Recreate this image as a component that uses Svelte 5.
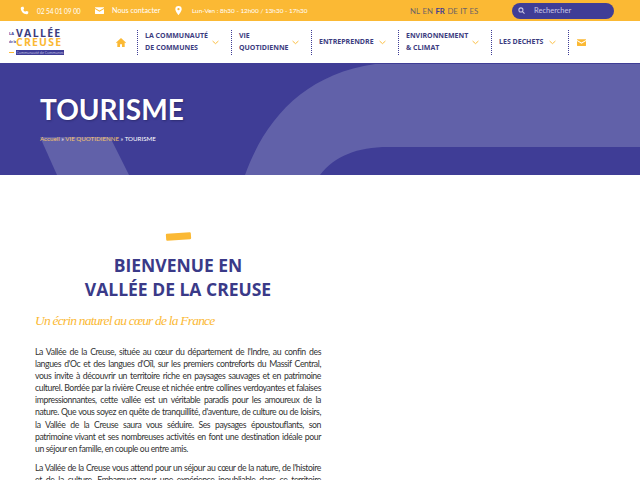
<script>
	const menu = [
		{ lines: ['LA COMMUNAUTÉ', 'DE COMMUNES'], width: 94 },
		{ lines: ['VIE', 'QUOTIDIENNE'], width: 80 },
		{ lines: ['ENTREPRENDRE'], width: 87 },
		{ lines: ['ENVIRONNEMENT', '& CLIMAT'], width: 93 },
		{ lines: ['LES DECHETS'], width: 77 }
	];
	const langs = ['NL', 'EN', 'FR', 'DE', 'IT', 'ES'];
</script>

<div class="page">
	<div class="topbar">
		<div class="contact">
			<svg class="ico phone" viewBox="0 0 24 24" fill="#fff"><path d="M6 2 9.500 2 11 8 8.500 10C9.500 12.500 11.500 14.500 14 15.500L16 13 22 14.500 22 18C22 20.500 20 22 18 22 9 21.500 2.500 15 2 6 2 4 3.500 2 6 2Z"/></svg>
			<span class="t-phone">02 54 01 09 00</span>
			<svg class="ico mail" viewBox="0 0 24 18" fill="#fff"><path d="M1 0h22a1 1 0 0 1 1 1v1L12 9 0 2V1a1 1 0 0 1 1-1Z"/><path d="M0 5l12 7 12-7v12a1 1 0 0 1-1 1H1a1 1 0 0 1-1-1Z"/></svg>
			<span class="t-mail">Nous contacter</span>
			<svg class="ico pin" viewBox="0 0 18 24" fill="#fff"><path fill-rule="evenodd" d="M9 0a8.500 8.500 0 0 1 8.500 8.500C17.500 14 9 24 9 24S.5 14 .5 8.500A8.500 8.500 0 0 1 9 0Zm0 5.500a3 3 0 1 0 0 6 3 3 0 0 0 0-6Z"/></svg>
			<span class="t-hours">Lun-Ven : 8h30 - 12h00 / 13h30 - 17h30</span>
		</div>
		<div class="langs">
			{#each langs as l}
				<span class:on={l === 'FR'}>{l}</span>
			{/each}
		</div>
		<div class="search">
			<svg viewBox="0 0 24 24" fill="none" stroke="#c9c7e6" stroke-width="3.500" stroke-linecap="round"><circle cx="10" cy="10" r="7"/><path d="m15.500 15.500 6 6"/></svg>
			<span>Rechercher</span>
		</div>
	</div>

	<nav class="nav">
		<div class="logo">
			<div class="logo-row"><span class="la">LA</span><span class="vallee">VALLÉE</span></div>
			<div class="logo-row"><span class="la small">de la</span><span class="creuse">CREUSE</span></div>
			<div class="logo-row"><span class="dash"></span><span class="tag">Communauté de Communes</span></div>
		</div>
		<svg class="home" viewBox="0 0 24 22" fill="#fbb934"><path d="M12 0 24 11l-1.500 1.600L21 11.300V22h-6.500v-7h-5v7H3V11.300l-1.500 1.300L0 11Z"/></svg>
		{#each menu as item}
			<div class="item" style={`width:${item.width}px`}>
				<div class="label">
					{#each item.lines as line}<div>{line}</div>{/each}
				</div>
				<svg class="chev" viewBox="0 0 12 7" fill="none" stroke="#fbb934" stroke-width="1.600"><path d="m1 1 5 4.500L11 1"/></svg>
			</div>
		{/each}
		<div class="item last">
			<svg class="envelope" viewBox="0 0 24 18" fill="#fbb934"><path d="M1 0h22a1 1 0 0 1 1 1v1L12 9 0 2V1a1 1 0 0 1 1-1Z"/><path d="M0 5l12 7 12-7v12a1 1 0 0 1-1 1H1a1 1 0 0 1-1-1Z"/></svg>
		</div>
	</nav>

	<header class="hero">
		<svg class="shapes" viewBox="0 0 640 111" fill="#6161a9">
			<path d="M245 111C265 55 305 10 375 0H640V83H388C357 83 335 92 320 111Z"/>
			<path d="M40 73H110L129 111H57Z"/>
		</svg>
		<h1>TOURISME</h1>
		<div class="crumbs"><span class="gold">Accueil</span> » <span class="gold">VIE QUOTIDIENNE</span> » TOURISME</div>
	</header>

	<main class="content">
		<section class="intro">
			<div class="stroke"></div>
			<h2>BIENVENUE EN<br />VALLÉE DE LA CREUSE</h2>
			<h3>Un écrin naturel au cœur de la France</h3>
			<p>La Vallée de la Creuse, située au cœur du département de l'Indre, au confin des langues d'Oc et des langues d'Oïl, sur les premiers contreforts du Massif Central, vous invite à découvrir un territoire riche en paysages sauvages et en patrimoine culturel. Bordée par la rivière Creuse et nichée entre collines verdoyantes et falaises impressionnantes, cette vallée est un véritable paradis pour les amoureux de la nature. Que vous soyez en quête de tranquillité, d'aventure, de culture ou de loisirs, la Vallée de la Creuse saura vous séduire. Ses paysages époustouflants, son patrimoine vivant et ses nombreuses activités en font une destination idéale pour un séjour en famille, en couple ou entre amis.</p>
			<p>La Vallée de la Creuse vous attend pour un séjour au cœur de la nature, de l'histoire et de la culture. Embarquez pour une expérience inoubliable dans ce territoire authentique et préservé, où chaque visite est une découverte.</p>
		</section>
	</main>
</div>

<style>
	:global(body) {
		margin: 0;
		overflow: hidden;
		background: #fff;
	}
	.page {
		width: 640px;
		height: 480px;
		overflow: hidden;
		font-family: "Open Sans", sans-serif;
	}
	.topbar {
		height: 21px;
		background: #fbb934;
		display: flex;
		align-items: center;
		color: #fff;
		font-family: Lato, sans-serif;
		font-size: 6.400px;
		padding-left: 20px;
	}
	.contact {
		width: 390px;
		display: flex;
		align-items: center;
	}
	.ico {
		flex-shrink: 0;
	}
	.phone {
		width: 9px;
		height: 9px;
		margin-right: 8px;
	}
	.t-phone {
		width: 58px;
		font-size: 6.600px;
		letter-spacing: -0.1px;
	}
	.mail {
		width: 9px;
		height: 7px;
		margin-right: 8px;
	}
	.t-mail {
		width: 63px;
		font-size: 7.200px;
	}
	.pin {
		width: 7px;
		height: 9px;
		margin-right: 10px;
	}
	.t-hours {
		white-space: nowrap;
	}
	.langs {
		display: flex;
		gap: 2.500px;
		color: #6b6267;
		font-size: 7.800px;
		width: 102px;
	}
	.langs .on {
		color: #3f3d96;
		font-weight: 700;
	}
	.search {
		width: 102px;
		height: 16px;
		box-sizing: border-box;
		padding-left: 6px;
		display: flex;
		align-items: center;
		gap: 9px;
		background: #3f3d96;
		border-radius: 8px;
		color: #c9c7e6;
		font-size: 7.500px;
	}
	.search svg {
		width: 7px;
		height: 7px;
	}
	.nav {
		height: 42px;
		display: flex;
		align-items: center;
		border-bottom: 1px solid #3f3d96;
		color: #3c3c80;
		font-family: "Open Sans", sans-serif;
	}
	.logo {
		width: 106px;
		padding-left: 9px;
		box-sizing: border-box;
		line-height: 9px;
	}
	.logo-row {
		display: flex;
		align-items: center;
		height: 9.500px;
	}
	.la {
		width: 7px;
		font-size: 4px;
		font-weight: 700;
		color: #3f3d96;
		white-space: nowrap;
		overflow: hidden;
	}
	.small {
		font-size: 3px;
	}
	.vallee,
	.creuse {
		font-size: 10.500px;
		font-weight: 700;
		letter-spacing: 1.300px;
	}
	.creuse {
		color: #fbb934;
		letter-spacing: 1.200px;
	}
	.logo-row:last-child {
		height: 6px;
		margin-top: 2px;
	}
	.dash {
		width: 5px;
		height: 1px;
		margin-right: 2px;
		background: #fbb934;
	}
	.tag {
		width: 48px;
		height: 5px;
		background: #3f3d96;
		color: #c9c7e6;
		font-size: 3.500px;
		line-height: 5px;
		white-space: nowrap;
		overflow: hidden;
		text-align: center;
	}
	.home {
		width: 10px;
		height: 9px;
		margin: 0 11px 0 10px;
		flex-shrink: 0;
	}
	.item {
		height: 25px;
		box-sizing: border-box;
		border-left: 1px dotted #3f3d96;
		padding: 0 12px 0 7px;
		display: flex;
		align-items: center;
		justify-content: space-between;
		font-size: 7px;
		font-weight: 700;
		line-height: 12px;
		white-space: nowrap;
		flex-shrink: 0;
	}
	.chev {
		width: 7px;
		height: 5px;
		flex-shrink: 0;
	}
	.last {
		padding-left: 8px;
	}
	.envelope {
		width: 9px;
		height: 7px;
	}
	.hero {
		position: relative;
		height: 111px;
		background: #3f3d96;
		overflow: hidden;
		padding-left: 40px;
		box-sizing: border-box;
		color: #fff;
	}
	.shapes {
		position: absolute;
		inset: 0;
		width: 640px;
		height: 111px;
	}
	.hero h1 {
		position: relative;
		margin: 0;
		padding-top: 27px;
		font-family: Lato, sans-serif;
		font-weight: 700;
		font-size: 28px;
		line-height: 36px;
		text-shadow: 1px 1px 2px rgba(30, 30, 80, 0.5);
	}
	.crumbs {
		position: relative;
		margin-top: 7px;
		font-size: 6.200px;
		line-height: 10px;
		font-family: Lato, sans-serif;
	}
	.gold {
		color: #f5c26b;
	}
	.content {
		padding: 58px 0 0 35px;
	}
	.intro {
		width: 286px;
	}
	.stroke {
		width: 25px;
		height: 7px;
		margin: 0 auto 13px;
		background: #fbb934;
		transform: rotate(-4deg);
		border-radius: 1px;
	}
	h2 {
		margin: 0;
		color: #3a3a88;
		font-family: "Open Sans", sans-serif;
		font-weight: 700;
		font-size: 17.500px;
		line-height: 24px;
		text-align: center;
	}
	h3 {
		margin: 10px 0 15px;
		color: #fbb934;
		font-family: "Liberation Serif", serif;
		font-style: italic;
		font-weight: 400;
		font-size: 13.500px;
		letter-spacing: -0.800px;
		line-height: 20px;
		white-space: nowrap;
	}
	p {
		margin: 0 0 7px;
		font-family: Lato, sans-serif;
		font-size: 8.700px;
		letter-spacing: -0.400px;
		line-height: 12.100px;
		color: #333;
		text-align: justify;
	}
</style>
